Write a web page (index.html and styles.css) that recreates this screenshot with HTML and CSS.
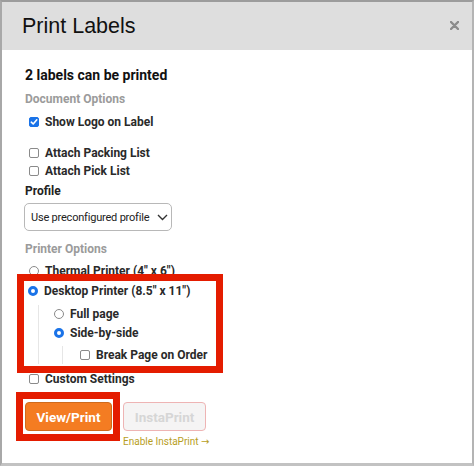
FILE: index.html
```html
<!DOCTYPE html>
<html>
<head>
<meta charset="utf-8">
<link rel="stylesheet" href="styles.css">
</head>
<body>
<div class="modal">
  <div class="header">
    <h1 class="title">Print Labels</h1>
    <span class="close"><svg width="9" height="9" viewBox="0 0 9 9"><path d="M1 1 L8 8 M8 1 L1 8" stroke="#8c8c8c" stroke-width="2.4" stroke-linecap="round"/></svg></span>
  </div>
  <div class="body">
    <div class="row lead">2 labels can be printed</div>
    <div class="row section r-doc">Document Options</div>
    <div class="row opt r-logo"><span class="cb checked"><svg width="8" height="8" viewBox="0 0 8 8"><path d="M1.3 4.2 L3.2 6 L6.8 1.8" fill="none" stroke="#fff" stroke-width="1.6" stroke-linecap="round" stroke-linejoin="round"/></svg></span>Show Logo on Label</div>
    <div class="row opt r-pack"><span class="cb"></span>Attach Packing List</div>
    <div class="row opt"><span class="cb"></span>Attach Pick List</div>
    <div class="row label r-profile">Profile</div>
    <div class="select">
      <span class="select-text">Use preconfigured profile</span>
      <svg class="chev" width="11" height="7" viewBox="0 0 11 7"><path d="M1 1 L5.5 5.5 L10 1" fill="none" stroke="#333" stroke-width="1.4"/></svg>
    </div>
    <div class="row section r-printer">Printer Options</div>
    <div class="row opt thin r-thermal"><span class="rd"></span>Thermal Printer (4" x 6")</div>
    <div class="mark mark-a">
      <div class="row opt r-desk"><span class="rd on"></span>Desktop Printer (8.5" x 11")</div>
      <div class="sub">
        <div class="row opt r-full"><span class="rd"></span>Full page</div>
        <div class="row opt r-side"><span class="rd on"></span>Side-by-side</div>
        <div class="sub sub2">
          <div class="row opt"><span class="cb"></span>Break Page on Order</div>
        </div>
      </div>
    </div>
    <div class="row opt thin"><span class="cb"></span>Custom Settings</div>
    <div class="actions">
      <div class="mark mark-b">
        <button class="btn primary">View/Print</button>
      </div>
      <div class="insta">
        <button class="btn disabled">InstaPrint</button>
        <span class="enable">Enable InstaPrint <span class="arrow">→</span></span>
      </div>
    </div>
  </div>
</div>
</body>
</html>
```

FILE: styles.css
```css
* { box-sizing: border-box; }
html, body { margin: 0; padding: 0; background: #fff; }
body { width: 474px; height: 466px; overflow: hidden; }

.modal {
  width: 474px;
  height: 466px;
  border-top: 2px solid #9c9c9c;
  border-left: 2px solid #a8a8a8;
  border-right: 2px solid #b4b4b4;
  border-bottom: 3px solid #c2c2c2;
  background: #fff;
  font-family: Roboto, "Liberation Sans", sans-serif;
  color: #1e1e1e;
}

.header {
  height: 48px;
  background: #dedede;
  display: flex;
  align-items: center;
  justify-content: space-between;
  padding: 0 13px 0 20px;
}
.title {
  margin: 0;
  font-family: "Liberation Sans", Arial, sans-serif;
  font-weight: 400;
  font-size: 21.5px;
  color: #111;
  padding-top: 1px;
}
.close { display: flex; margin-top: -2px; }

.body { padding: 16px 0 0 23px; }

.row {
  height: 18px;
  line-height: 18px;
  font-size: 12px;
  font-weight: 700;
  display: flex;
  align-items: center;
  white-space: nowrap;
}
.row.thin { height: 12px; line-height: 12px; }
.lead { font-size: 14px; color: #111; }
.section { color: #9b9b9b; }
.label { color: #222; }
.opt { padding-left: 4px; color: #2a2a2a; }

.r-doc { margin-top: 6px; }
.r-logo { margin-top: 5px; }
.r-pack { margin-top: 13px; }
.r-profile { margin-top: 2px; }
.r-printer { margin-top: 9px; }
.r-thermal { margin-top: 7px; }

.cb, .rd {
  width: 10px;
  height: 10px;
  flex: none;
  margin-right: 6px;
  border: 1px solid #8a8a8a;
  background: #fff;
  display: flex;
  align-items: center;
  justify-content: center;
}
.cb { border-radius: 2px; }
.cb.checked { background: #1a73e8; border-color: #1a73e8; }
.rd { border-radius: 50%; }
.rd.on { border: 3px solid #1a73e8; }

.select {
  margin-top: 3px;
  margin-left: -1px;
  width: 148px;
  height: 28px;
  border: 1px solid #b8b8b8;
  border-radius: 5px;
  display: flex;
  align-items: center;
  justify-content: space-between;
  padding: 0 3px 0 6px;
  font-size: 11px;
  color: #222;
  white-space: nowrap;
}
.select-text { letter-spacing: -0.2px; }
.chev { flex: none; }

.mark {
  position: relative;
  border: 7px solid #e41c00;
  background: transparent;
}
.mark-a {
  margin-top: -3px;
  margin-left: -8px;
  width: 206px;
  height: 99px;
  padding: 1px 0 0 2px;
}
.mark-a .opt { padding-left: 2px; }
.sub {
  margin-left: 12px;
  border-left: 1px solid #e6e6e6;
  padding-left: 13px;
}
.r-full { margin-top: 5px; }
.r-side { margin-top: 1px; }
.sub2 {
  margin-left: 10px;
  margin-top: 4px;
  padding-left: 15px;
}

.actions {
  display: flex;
  align-items: flex-start;
  margin-top: 7px;
}
.mark-b {
  margin-left: -9px;
  width: 104px;
  height: 49px;
  padding: 3px 0 0 2px;
}
.btn {
  font-family: Roboto, "Liberation Sans", sans-serif;
  font-weight: 700;
  font-size: 13.5px;
  height: 29px;
  border-radius: 4px;
  padding: 0;
}
.primary {
  width: 87px;
  background: #f47c22;
  border: 1px solid #cf6a1c;
  color: #fff;
}
.insta {
  display: flex;
  flex-direction: column;
  margin-left: 3px;
  margin-top: 10px;
}
.disabled {
  width: 83px;
  background: #f5f4f4;
  border: 1px solid #eeb4b4;
  color: #d6d6d6;
}
.enable {
  margin-top: 5px;
  font-size: 10px;
  color: #b79e1e;
  white-space: nowrap;
}
.arrow { font-family: "DejaVu Sans", sans-serif; font-size: 10px; }
```
